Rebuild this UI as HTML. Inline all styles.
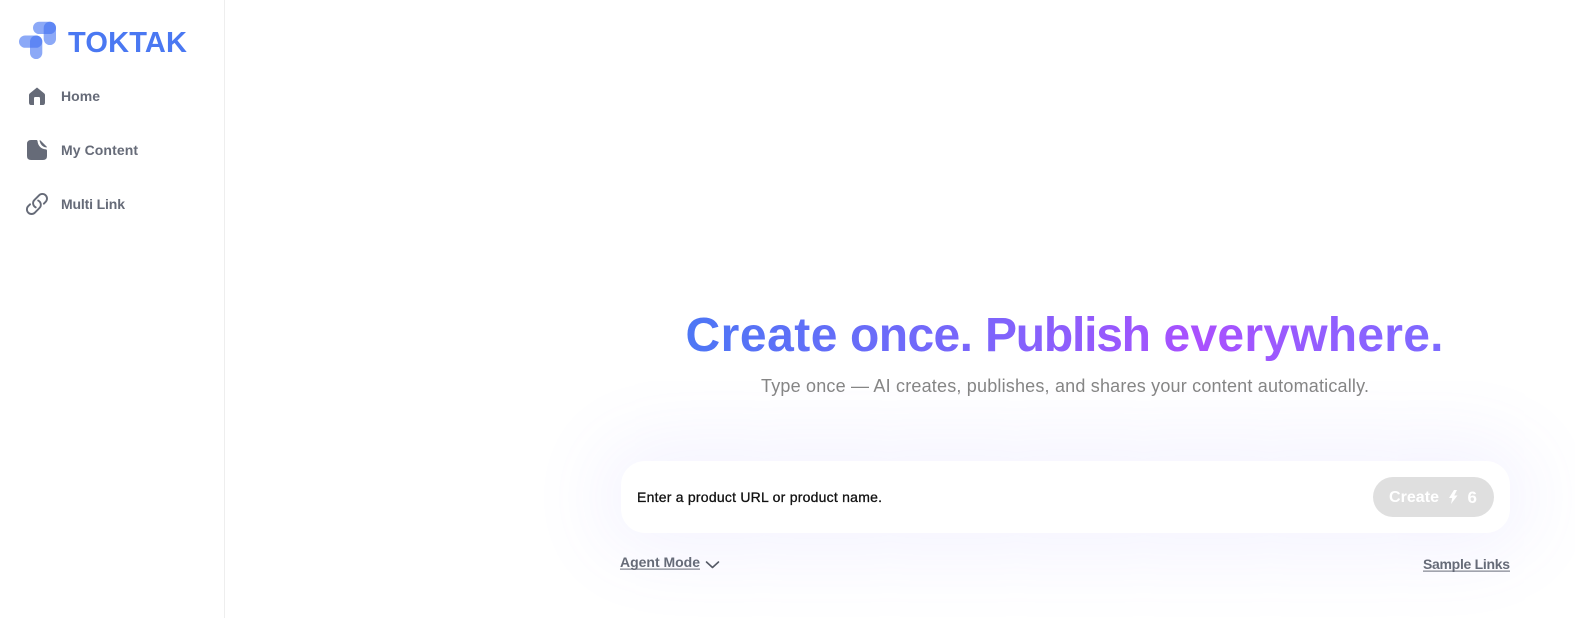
<!DOCTYPE html>
<html lang="en">
<head>
<meta charset="utf-8">
<title>TOKTAK</title>
<style>
html,body{margin:0;padding:0;width:1575px;height:618px;overflow:hidden;background:#fff}
#glow{position:absolute;left:621px;top:461px;width:889px;height:72px;border-radius:24px;background:#fff;box-shadow:0 0 80px 18px rgba(120,100,255,.085)}
svg{position:absolute;left:0;top:0}
text{font-family:"Liberation Sans",sans-serif}
#side{position:absolute;left:0;top:0;width:224px;height:618px;background:#fff;border-right:1px solid #eeeeee;box-sizing:content-box}
</style>
</head>
<body>
<div id="side"></div>
<div id="glow"></div>
<svg width="1575" height="618" viewBox="0 0 1575 618" xmlns="http://www.w3.org/2000/svg">
<defs>
<linearGradient id="g" gradientUnits="userSpaceOnUse" x1="687" y1="0" x2="1442" y2="0">
<stop offset="0" stop-color="#4d76f5"/>
<stop offset=".38" stop-color="#7a66fb"/>
<stop offset=".68" stop-color="#aa50fe"/>
<stop offset="1" stop-color="#7c6bff"/>
</linearGradient>
</defs>

<!-- logo -->
<g fill="#3f70f2" fill-opacity=".6">
<rect x="33" y="21.7" width="23" height="12.3" rx="6.15"/>
<rect x="43.7" y="21.7" width="12.3" height="23.3" rx="6.15"/>
<rect x="19" y="35.5" width="23.3" height="12.3" rx="6.15"/>
<rect x="30" y="35.5" width="12.3" height="23.5" rx="6.15"/>
</g>
<text x="68" y="52" font-size="29" font-weight="700" fill="#4a78f2" textLength="119" lengthAdjust="spacing">TOKTAK</text>

<!-- home -->
<path fill="#666b78" d="M37 87.5 L44.2 93.4 Q45 94 45 95 V102.5 Q45 105 43 105 H40 V98.5 Q40 97 39 97 H35 Q34 97 34 98.5 V105 H31 Q29 105 29 102.5 V95 Q29 94 29.8 93.4 Z"/>
<text x="61" y="101" font-size="14" font-weight="700" fill="#666b78" textLength="39" lengthAdjust="spacing">Home</text>

<!-- document -->
<path fill="#666b78" d="M31 140 H36.6 Q37.4 140 37.5 141 Q38.4 148.6 46 149.4 Q47 149.6 47 150.6 V156 Q47 160 43 160 H31 Q27 160 27 156 V144 Q27 140 31 140 Z"/>
<path fill="#666b78" d="M39.6 140.4 Q40 140 40.4 140.4 L46.8 146.8 Q47.2 147.4 46.4 147.5 Q41 147 39.6 141 Z"/>
<text x="61" y="155" font-size="14" font-weight="700" fill="#666b78" textLength="77" lengthAdjust="spacing">My Content</text>

<!-- link -->
<g transform="translate(24.6 191.6) scale(1.03)">
<path fill="none" stroke="#666b78" stroke-width="1.85" stroke-linecap="round" stroke-linejoin="round" d="M13.19 8.688a4.5 4.5 0 0 1 1.242 7.244l-4.5 4.5a4.5 4.5 0 0 1-6.364-6.364l1.757-1.757m13.35-.622 1.757-1.757a4.5 4.5 0 0 0-6.364-6.364l-4.5 4.5a4.5 4.5 0 0 0 1.242 7.244"/>
</g>
<text x="61" y="209" font-size="14" font-weight="700" fill="#666b78" textLength="64" lengthAdjust="spacing">Multi Link</text>

<!-- hero -->
<g font-size="48" font-weight="700" fill="url(#g)">
<text x="685.5" y="351" textLength="152" lengthAdjust="spacing">Create</text>
<text x="850" y="351" textLength="123" lengthAdjust="spacing">once.</text>
<text x="985" y="351" textLength="166" lengthAdjust="spacing">Publish</text>
<text x="1163.5" y="351" textLength="280" lengthAdjust="spacing">everywhere.</text>
</g>
<text x="761" y="392" font-size="18" fill="#858585" textLength="608" lengthAdjust="spacing">Type once — AI creates, publishes, and shares your content automatically.</text>

<!-- input -->
<text x="637" y="502" font-size="14" fill="#111111" stroke="#111111" stroke-width=".3" textLength="245" lengthAdjust="spacing">Enter a product URL or product name.</text>
<rect x="1373" y="477" width="121" height="40" rx="20" fill="#dfdfdf"/>
<text x="1389" y="502" font-size="16" font-weight="700" fill="#fff" textLength="50" lengthAdjust="spacing">Create</text>
<path fill="#fff" d="M1454 490 L1449 498 H1452.2 L1451 504 L1457.5 495.5 H1454.2 L1457 490 Z"/>
<text x="1467.5" y="503" font-size="17" font-weight="700" fill="#fff">6</text>

<!-- links -->
<text x="620" y="567" font-size="14" font-weight="700" fill="#666b78" textLength="80" lengthAdjust="spacing">Agent Mode</text>
<rect x="620" y="568.6" width="80" height="1" fill="#666b78"/>
<path d="M706.5 562 L712.5 567.5 L718.5 562" fill="none" stroke="#555a66" stroke-width="1.6" stroke-linecap="round" stroke-linejoin="round"/>
<text x="1423" y="569" font-size="14" font-weight="700" fill="#666b78" textLength="87" lengthAdjust="spacing">Sample Links</text>
<rect x="1423" y="570.6" width="87" height="1" fill="#666b78"/>
</svg>
</body>
</html>
